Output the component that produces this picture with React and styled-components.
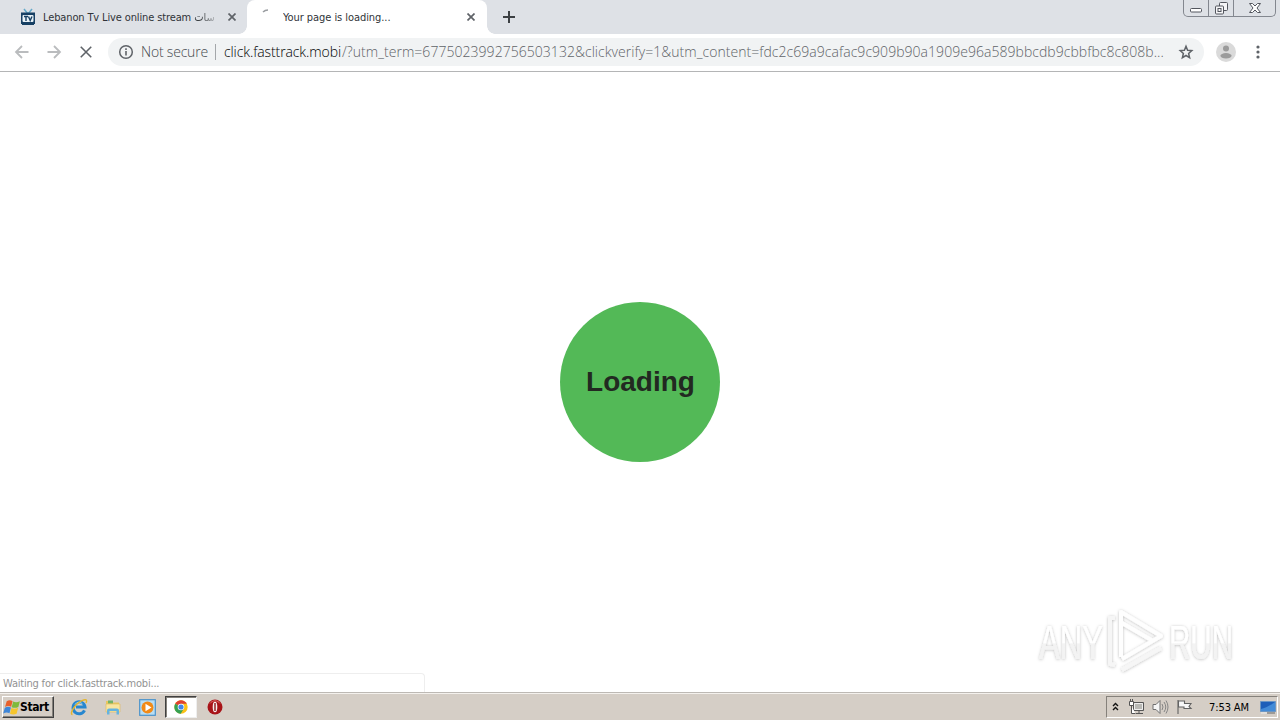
import React from "react";
import styled, { createGlobalStyle } from "styled-components";

const colors = {
    strip: "#dee1e6",
    omnibox: "#f1f3f4",
    icon: "#5f6368",
    taskbar: "#d5cec6",
};

const uiFont = `"DejaVu Sans Condensed", "DejaVu Sans", sans-serif`;
const query = "/?utm_term=6775023992756503132&clickverify=1&utm_content=fdc2c69a9cafac9c909b90a1909e96a589bbcdb9cbbfbc8c808b...";

const TvIcon = () => (
    <svg width="16" height="18" viewBox="0 0 16 18">
        <path d="M4 1l4 5 4-5" fill="none" stroke="#63a9c9" strokeWidth="1.5" />
        <path d="M1 4.500h14V16H1z" fill="#163f63" />
        <rect x="2.5" y="7" width="11" height="7" rx="1" fill="#e9f2f7" />
        <path d="M4 8.5h4M6 8.5v4.5M8.5 8.5l1.7 4 1.8-4" fill="none" stroke="#163f63" strokeWidth="1.4" />
        <path d="M2 16.5h12" stroke="#163f63" strokeWidth="1" />
    </svg>
);

const Cross = ({ size = 8, weight = 1.7, color = colors.icon }) => (
    <svg width={size} height={size} viewBox="0 0 8 8">
        <path d="M.5 .5l7 7M7.5 .5l-7 7" stroke={color} strokeWidth={weight} />
    </svg>
);

const Arrow = ({ forward }) => (
    <svg width="16" height="16" viewBox="0 0 16 16">
        <path
            d={forward ? "M1.500 8h12M8 2l6 6-6 6" : "M14.500 8h-12M8 2L2 8l6 6"}
            fill="none" stroke="#babcbe" strokeWidth="1.8"
        />
    </svg>
);

const InfoIcon = () => (
    <svg width="16" height="16" viewBox="0 0 16 16">
        <circle cx="8" cy="8" r="6.3" fill="none" stroke={colors.icon} strokeWidth="1.5" />
        <path d="M8 7v4.5M8 4.3v1.6" stroke={colors.icon} strokeWidth="1.6" />
    </svg>
);

const StarIcon = () => (
    <svg width="16" height="16" viewBox="0 0 16 16">
        <path d="M8 2.200l1.600 4 4.200.4-3.200 2.900 1 4.200L8 11.500l-3.600 2.200 1-4.200-3.200-2.900 4.200-.4z" fill="none" stroke={colors.icon} strokeWidth="1.5" />
    </svg>
);

const AvatarIcon = () => (
    <svg width="20" height="20" viewBox="0 0 20 20">
        <circle cx="10" cy="10" r="10" fill="#dadada" />
        <circle cx="10" cy="6.5" r="3" fill="#9b9b9b" />
        <ellipse cx="10" cy="13.8" rx="5.6" ry="2.7" fill="#9b9b9b" />
    </svg>
);

const MenuIcon = () => (
    <svg width="4" height="14" viewBox="0 0 4 14" fill={colors.icon}>
        <circle cx="2" cy="2" r="1.6" />
        <circle cx="2" cy="7" r="1.6" />
        <circle cx="2" cy="12" r="1.6" />
    </svg>
);

const WindowsFlag = () => (
    <svg width="17" height="17" viewBox="0 0 16.500 15.500">
        <path d="M3.600 1.700Q6.500-.200 9.300 1.600L7.900 7.100Q5 5.600 2 7.200z" fill="#e8602c" />
        <path d="M9.900 2Q12.800 3.600 16.400 1.700L14.900 7.200Q11.500 8.900 8.400 7.400z" fill="#7fba3c" />
        <path d="M1.800 7.900Q5 6.300 7.700 7.800L6.300 13.300Q3.500 11.700.2 13.500z" fill="#3f86d8" />
        <path d="M8.200 8.200Q11.300 9.700 14.700 8L13.200 13.700Q10 15.300 6.800 13.700z" fill="#f6c52c" />
    </svg>
);

const ExplorerIcon = () => (
    <svg width="18" height="18" viewBox="0 0 18 18">
        <path d="M14.5 12.300A6 6 0 1 1 15 9H6" fill="none" stroke="#2787cf" strokeWidth="3" />
        <path d="M5 6.500A4.500 4.500 0 0 1 12.500 6" fill="none" stroke="#8fd0f5" strokeWidth="1" />
        <path d="M2.500 16.500C-1 16 5 6 12 2.700 16 .8 17.500 1.800 16 5" fill="none" stroke="#e5b52b" strokeWidth="1.400" />
    </svg>
);

const FolderIcon = () => (
    <svg width="18" height="18" viewBox="0 0 18 18">
        <path d="M2 3h5l1 1.500h7V14H2z" fill="#e9c75e" />
        <path d="M4 2.500h5v3H4z" fill="#72b267" />
        <path d="M2 6h14v8H2z" fill="#f8e5a0" stroke="#dfbb5c" strokeWidth=".6" />
        <path d="M3 16.500v-4q0-2 2-2h8q2 0 2 2v4h-2.500V13h-7v3.500z" fill="#65b3df" />
    </svg>
);

const MediaIcon = () => (
    <svg width="17" height="17" viewBox="0 0 17 17">
        <rect x=".7" y=".7" width="15.600" height="15.600" fill="#b8def4" stroke="#4a92ca" strokeWidth="1.200" />
        <circle cx="8.500" cy="8.500" r="6" fill="#f28a16" />
        <path d="M6.500 4.800l6 3.700-6 3.700z" fill="#fff" />
    </svg>
);

const ChromeIcon = () => (
    <svg width="14" height="14" viewBox="0 0 14 14">
        <circle cx="7" cy="7" r="6.700" fill="#fbc116" />
        <path d="M7 7L1.200 3.650A6.700 6.700 0 0 1 12.800 3.650H7z" fill="#df4032" />
        <path d="M7 7L1.200 3.650A6.700 6.700 0 0 0 6.700 13.700L9.700 8.700z" fill="#36a153" />
        <circle cx="7" cy="7" r="3.300" fill="#fff" />
        <circle cx="7" cy="7" r="2.600" fill="#4285e9" />
    </svg>
);

const OperaIcon = () => (
    <svg width="16" height="16" viewBox="0 0 16 16">
        <circle cx="8" cy="8" r="7.500" fill="#a81318" />
        <path d="M3 4.500A6 6 0 0 1 13 4.500" fill="none" stroke="#df6b68" strokeWidth="1" />
        <ellipse cx="8" cy="8" rx="2.300" ry="5.300" fill="#f7eeee" />
        <path d="M8 4v8" stroke="#8b1518" strokeWidth="1.400" />
    </svg>
);

const TrayChevron = () => (
    <svg width="7" height="10" viewBox="0 0 7 10">
        <path d="M1 4l2.500-2.500L6 4M1 8l2.500-2.500L6 8" fill="none" stroke="#111" strokeWidth="1.400" />
    </svg>
);

const NetworkIcon = () => (
    <svg width="17" height="16" viewBox="0 0 17 16">
        <path d="M5.500 3.500h10v8h-10z" fill="#b9b9b5" stroke="#555" />
        <path d="M6.500 4.500h8v6h-8z" fill="none" stroke="#eee" />
        <path d="M8 14.500h7M11 12v2" stroke="#555" />
        <path d="M1.500 2.500h4v4h-4zM2.500 0v2M4.500 0v2M3.500 7v7.500h4" fill="#fff" stroke="#555" />
    </svg>
);

const SpeakerIcon = () => (
    <svg width="17" height="16" viewBox="0 0 17 16">
        <path d="M1 5.500h3l4-4v13l-4-4H1z" fill="#f5f5f5" stroke="#707070" />
        <path d="M10 5q2 3 0 6M12 3q3.500 5 0 10M14 1.500q4 6.500 0 13" fill="none" stroke="#858585" />
    </svg>
);

const FlagIcon = () => (
    <svg width="17" height="16" viewBox="0 0 17 16">
        <path d="M2 15V1M2.500 2h6v2.500h6.500l-2 3 2 2H8V8H2.500z" fill="#f7f7f7" stroke="#626262" strokeWidth="1.100" />
    </svg>
);

const DesktopIcon = () => (
    <svg width="16" height="13" viewBox="0 0 16 13">
        <path d="M.5.5h15v10H.5z" fill="#1e5fb9" stroke="#6b96c4" />
        <path d="M1 8Q7 7 15 1v9H1z" fill="#438bd7" />
        <path d="M1 12h6" stroke="#eee" />
        <path d="M7 12h8" stroke="#666" />
    </svg>
);

const WatermarkLogo = () => (
    <svg width="244" height="76" viewBox="0 0 244 76">
        <defs>
            <filter id="glow" x="-10%" y="-20%" width="120%" height="140%">
                <feDropShadow dx="0" dy="0.5" stdDeviation="1.8" floodColor="#000" floodOpacity=".27" />
            </filter>
            <linearGradient id="face" x1="0" y1="0" x2="0" y2="1">
                <stop offset=".5" stopColor="#fff" />
                <stop offset=".53" stopColor="#f3f3f3" />
            </linearGradient>
        </defs>
        <g filter="url(#glow)">
            <WatermarkText x="3" y="52" textLength="64" lengthAdjust="spacingAndGlyphs">ANY</WatermarkText>
            <WatermarkText x="133" y="52" textLength="64" lengthAdjust="spacingAndGlyphs">RUN</WatermarkText>
            <g fill="none" strokeWidth="4" strokeLinejoin="round">
                <path d="M79 11h-5v46l5 1M86 63l39-22" stroke="#f6f6f6" />
                <path d="M85 50V5L125 29 86 52M86 16L117 34" stroke="#fefefe" />
            </g>
        </g>
    </svg>
);

const App = () => (
    <Screen>
        <GlobalStyle />
        <TabStrip>
            <Tab $width="247px">
                <TvIcon />
                <TabTitle $spacing="-0.13px">Lebanon Tv Live online stream <Faded>سات</Faded></TabTitle>
                <Cross />
            </Tab>
            <Tab $width="240px" $active>
                <Spinner viewBox="0 0 16 16">
                    <path d="M3 4Q5 2 8 2" fill="none" stroke="#9a9da1" strokeWidth="1.500" />
                </Spinner>
                <TabTitle $spacing="-0.06px">Your page is loading...</TabTitle>
                <Cross />
            </Tab>
            <NewTab>
                <svg width="12" height="12" viewBox="0 0 12 12"><path d="M6 0v12M0 6h12" stroke="#3c4043" strokeWidth="2" /></svg>
            </NewTab>
            <WindowControls>
                <Control $width="24px">
                    <svg width="13" height="5" viewBox="0 0 13 5"><rect x=".5" y=".5" width="11" height="3.500" rx="1" fill="#fff" stroke="#53565e" /></svg>
                </Control>
                <Control $width="25px">
                    <svg width="13" height="13" viewBox="0 0 13 13" fill="#f5f5f7" stroke="#53565e">
                        <rect x="4.500" y=".5" width="8" height="8" rx="1" />
                        <rect x=".5" y="4" width="8" height="8" rx="1" />
                        <rect x="3" y="6.500" width="3" height="3" />
                    </svg>
                </Control>
                <Control $width="42px">
                    <svg width="12" height="10" viewBox="0 0 12 10">
                        <path d="M.5.500h3L6 3 8.500.500h3L8 5l3.500 4.500h-3L6 7 3.500 9.500h-3L4 5z" fill="#fff" stroke="#53565e" />
                    </svg>
                </Control>
            </WindowControls>
        </TabStrip>
        <Toolbar>
            <Navigation>
                <Arrow />
                <Arrow forward />
                <StopButton><Cross size={12} weight={1.05} /></StopButton>
            </Navigation>
            <Omnibox>
                <InfoIcon />
                <Security>Not secure</Security>
                <Divider />
                <Url><Host>click.fasttrack.mobi</Host><Query>{query}</Query></Url>
                <StarIcon />
            </Omnibox>
            <Actions>
                <AvatarIcon />
                <MenuIcon />
            </Actions>
        </Toolbar>
        <Page>
            <LoadingCircle>Loading</LoadingCircle>
            <Status>Waiting for click.fasttrack.mobi...</Status>
            <Watermark><WatermarkLogo /></Watermark>
        </Page>
        <Taskbar>
            <StartButton><WindowsFlag />Start</StartButton>
            <QuickLaunch>
                <TaskItem><ExplorerIcon /></TaskItem>
                <TaskItem><FolderIcon /></TaskItem>
                <TaskItem><MediaIcon /></TaskItem>
                <TaskItem $active><ChromeIcon /></TaskItem>
                <TaskItem><OperaIcon /></TaskItem>
            </QuickLaunch>
            <Tray>
                <TrayChevron />
                <TrayIcons><NetworkIcon /><SpeakerIcon /><FlagIcon /></TrayIcons>
                <Clock>7:53 AM</Clock>
                <DesktopIcon />
            </Tray>
        </Taskbar>
    </Screen>
);

const GlobalStyle = createGlobalStyle`
    * { box-sizing: border-box; }
    body { margin: 0; overflow: hidden; background: #fff; }
    svg { flex-shrink: 0; display: block; }
`;

const Screen = styled.div`
    width: 1280px;
    height: 720px;
    display: flex;
    flex-direction: column;
    font-family: ${uiFont};
`;

const TabStrip = styled.div`
    height: 34px;
    display: flex;
    background: ${colors.strip};
`;

const Tab = styled.div`
    position: relative;
    width: ${props => props.$width};
    height: 34px;
    display: flex;
    align-items: center;
    padding: 0 ${props => props.$active ? "12px 0 12px" : "11px 0 20px"};
    border-radius: 8px 8px 0 0;
    background: ${props => props.$active ? "#fff" : "transparent"};

    ${props => props.$active && `
        &::before, &::after {
            content: "";
            position: absolute;
            bottom: 0;
            width: 8px;
            height: 8px;
        }
        &::before {
            left: -8px;
            background: radial-gradient(circle at 0 0, transparent 7.5px, #fff 8px);
        }
        &::after {
            right: -8px;
            background: radial-gradient(circle at 100% 0, transparent 7.5px, #fff 8px);
        }
    `}
`;

const TabTitle = styled.span`
    flex: 1;
    margin-left: 7px;
    padding-top: 1px;
    overflow: hidden;
    color: #303338;
    font-size: 11px;
    line-height: 18px;
    letter-spacing: ${props => props.$spacing};
    white-space: nowrap;
`;

const Faded = styled.span`
    background: linear-gradient(to left, #b5b8bc, #3c4043 65%);
    background-clip: text;
    color: transparent;
`;

const Spinner = styled.svg`
    width: 16px;
    height: 16px;
    margin: -2px 0 0 1px;
`;

const NewTab = styled.div`
    display: flex;
    align-items: center;
    margin-left: 16px;
`;

const WindowControls = styled.div`
    display: flex;
    height: 17px;
    margin: 0 4px 0 auto;
    border: 1px solid #83878f;
    border-top: 0;
    border-radius: 0 0 5px 5px;
`;

const Control = styled.div`
    width: ${props => props.$width};
    display: flex;
    align-items: center;
    justify-content: center;

    &:first-child { align-items: flex-end; padding-bottom: 3px; }
    & + & { border-left: 1px solid #83878f; }
`;

const Toolbar = styled.div`
    height: 38px;
    display: flex;
    align-items: center;
    padding-bottom: 1px;
    border-bottom: 1px solid #b4b5b6;
    background: #fff;
`;

const Navigation = styled.div`
    width: 108px;
    display: flex;
    align-items: center;
    gap: 16px;
    padding-left: 14px;
`;

const StopButton = styled.div`
    padding-left: 2px;
`;

const Omnibox = styled.div`
    width: 1096px;
    height: 28px;
    display: flex;
    align-items: center;
    padding: 0 10px;
    border-radius: 14px;
    background: ${colors.omnibox};
    font-family: "Open Sans", "Noto Sans", sans-serif;
    font-size: 14px;
    font-weight: 300;
    line-height: 28px;
`;

const Security = styled.span`
    width: 67px;
    margin-left: 7px;
    color: #45494e;
    white-space: nowrap;
    letter-spacing: -0.2px;
`;

const Divider = styled.span`
    width: 1px;
    height: 16px;
    margin: 0 8px 0 7px;
    background: #a4a7aa;
`;

const Url = styled.span`
    flex: 1;
    display: flex;
    white-space: nowrap;
`;

const Host = styled.span`
    width: 118px;
    color: #000;
    letter-spacing: -0.1px;
`;

const Query = styled.span`
    color: #5f6368;
    letter-spacing: 0.04px;
`;

const Actions = styled.div`
    display: flex;
    align-items: center;
    gap: 20px;
    padding-left: 12px;
`;

const Page = styled.main`
    position: relative;
    flex: 1;
    display: flex;
    align-items: center;
    justify-content: center;
    background: #fff;
`;

const LoadingCircle = styled.div`
    width: 160px;
    height: 160px;
    display: flex;
    align-items: center;
    justify-content: center;
    border-radius: 50%;
    background: #53b957;
    color: #222921;
    font: bold 28px "Liberation Sans", Arial, sans-serif;
    padding-left: 1px;
`;

const Status = styled.div`
    position: absolute;
    left: 0;
    bottom: 0;
    width: 425px;
    height: 19px;
    padding-left: 3px;
    border: 1px solid #eeeeee;
    border-width: 1px 1px 0 0;
    border-radius: 0 4px 0 0;
    color: #929292;
    font-size: 11px;
    line-height: 19px;
    letter-spacing: -0.2px;
`;

const Watermark = styled.div`
    position: absolute;
    right: 0;
    bottom: 9px;
`;

const WatermarkText = styled.text`
    fill: url(#face);
    font: 48px "Liberation Sans", Arial, sans-serif;
`;

const Taskbar = styled.div`
    height: 28px;
    display: flex;
    align-items: center;
    padding-top: 1px;
    border-top: 1px solid #bdb9b4;
    background: ${colors.taskbar};
    box-shadow: inset 0 1px #f4f1ed;
`;

const StartButton = styled.div`
    width: 52px;
    height: 22px;
    display: flex;
    align-items: center;
    margin-left: 2px;
    border: 1px solid;
    border-color: #fff #404040 #404040 #fff;
    box-shadow: inset -1px -1px #85817b;
    color: #000;
    font-size: 12px;
    font-weight: bold;
    letter-spacing: -0.4px;
`;

const QuickLaunch = styled.div`
    display: flex;
    align-items: center;
    gap: 2px;
    margin-left: 9px;
`;

const TaskItem = styled.div`
    width: 32px;
    height: 22px;
    display: flex;
    align-items: center;
    justify-content: center;
    border: 1px solid transparent;
    ${props => props.$active && `
        background: #fff;
        border-color: #404040 #eee #eee #404040;
        box-shadow: inset 1px 1px #85817b;
    `}
`;

const Tray = styled.div`
    width: 172px;
    height: 22px;
    display: flex;
    align-items: center;
    margin: 0 2px 0 auto;
    padding-left: 5px;
    border: 1px solid;
    border-color: #85817b #fff #fff #85817b;
`;

const TrayIcons = styled.div`
    display: flex;
    align-items: center;
    gap: 7px;
    margin-left: 9px;
`;

const Clock = styled.span`
    width: 43px;
    margin: 0 8px 0 16px;
    color: #000;
    font-size: 11px;
    letter-spacing: -0.1px;
    white-space: nowrap;
`;

export default App;
